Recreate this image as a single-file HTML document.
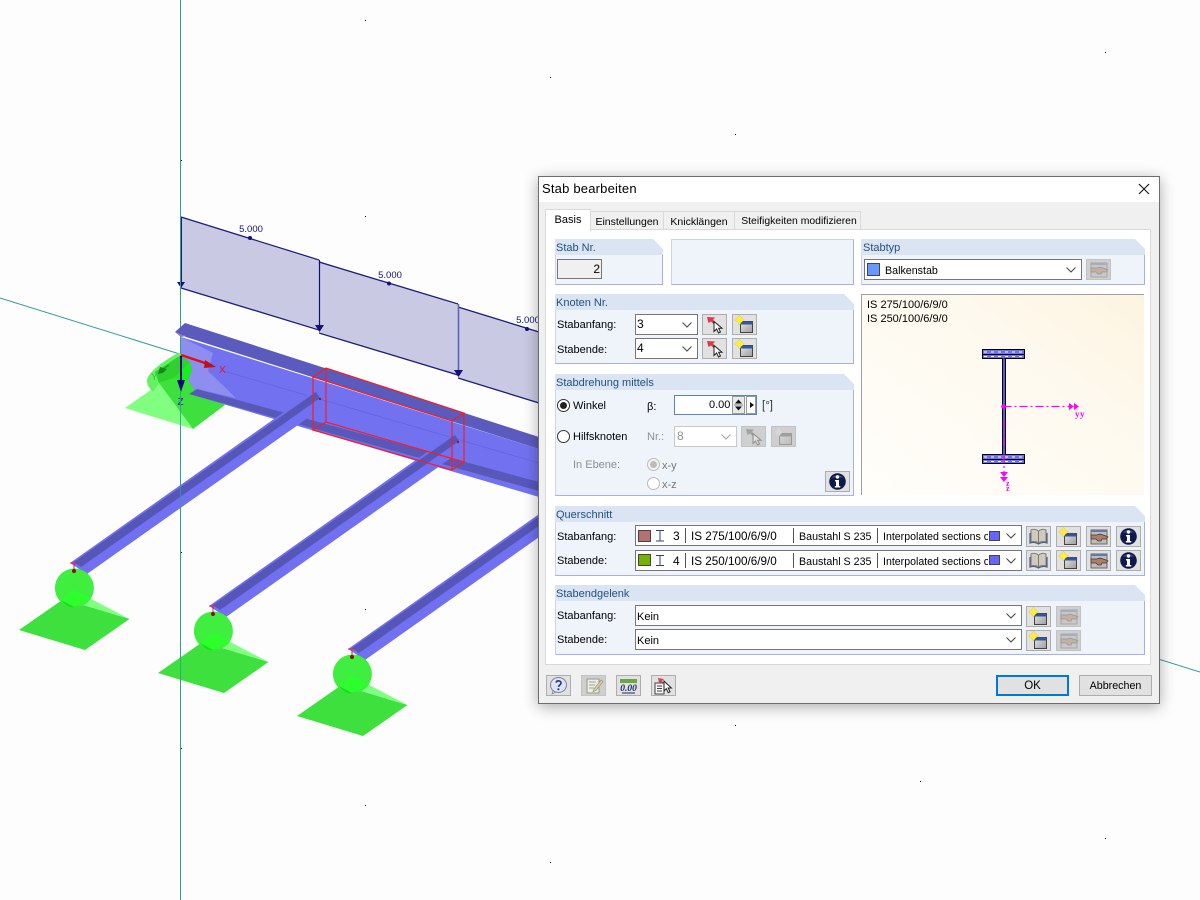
<!DOCTYPE html>
<html lang="de"><head><meta charset="utf-8"><title>Stab bearbeiten</title>
<style>
html,body{margin:0;padding:0;width:1200px;height:900px;overflow:hidden;background:#fdfdfd;font-family:"Liberation Sans",sans-serif;font-size:11px;color:#000}
#cv{position:absolute;left:0;top:0}
#dlg{position:absolute;left:538px;top:176px;width:620px;height:526px;background:#f0f0f0;border:1px solid #6d6d6d;box-shadow:0 3px 14px rgba(0,0,0,.32)}
#lay{position:absolute;left:-539px;top:-177px;width:1200px;height:900px}
.a{position:absolute;box-sizing:border-box}
.t{position:absolute;white-space:nowrap;line-height:14px;height:14px;margin-top:1px}
.g{color:#8f8f8f}
.gh{position:absolute;box-sizing:border-box;background:#dbe4f3;height:16px;clip-path:polygon(0 0,calc(100% - 10px) 0,100% 10px,100% 100%,0 100%);color:#22527f;padding-left:1px;line-height:19px}
.gb{position:absolute;box-sizing:border-box;background:#eff3fa;border-right:1px solid #a9aee6;border-bottom:1px solid #a9aee6;border-left:1px solid #ccd3ee;border-top:1px solid #fff}
.c{position:absolute;box-sizing:border-box;background:#fff;border:1px solid #767676}
.c svg.ch{position:absolute;right:5px;top:50%;margin-top:-3px}
.b{position:absolute;box-sizing:border-box;width:25px;height:21px;background:#e1e1e1;border:1px solid #adadad}
.b svg{position:absolute;left:-1px;top:-1px}
.d{background:#cfcfcf;border-color:#c2c2c2}
.d svg{opacity:.38}
.sep{position:absolute;width:1px;background:#555}
.sw{position:absolute;box-sizing:border-box;border:1px solid #444}
.r{position:absolute;box-sizing:border-box;width:13px;height:13px;border-radius:50%;border:1px solid #333;background:#fff}
.btn{position:absolute;box-sizing:border-box;width:73px;height:21px;background:#e1e1e1;border:1px solid #adadad;text-align:center;line-height:21px;font-size:10.7px}
.tab{position:absolute;box-sizing:border-box;text-align:center;background:#f0f0f0;border:1px solid #d9d9d9;border-bottom:0;line-height:20px;top:211px;height:18px;font-size:10.500px}
.q{font-size:11.700px}
.m{font-size:10.700px}
.i{font-size:10.600px}
</style></head><body>
<svg width="0" height="0" style="position:absolute">
<defs>
<linearGradient id="wg" x1="0" y1="0" x2="1" y2="1"><stop offset="0" stop-color="#e6e6e6"/><stop offset="1" stop-color="#9c9c9c"/></linearGradient>
<symbol id="chev" viewBox="0 0 10 6"><polyline points="0.5,0.5 5,5 9.500,0.5" fill="none" stroke="#444" stroke-width="1"/></symbol>
<symbol id="new" viewBox="0 0 25 21"><rect x="8.500" y="7.500" width="12" height="11" fill="url(#wg)" stroke="#444"/><rect x="8.500" y="7.500" width="12" height="3" fill="#34549c"/><polygon points="12.500,6 9.500,8 7.500,11 5.500,8 2.500,6 5.500,4 7.500,1 9.500,4" fill="#ffef3a" stroke="#d4c42a" stroke-width=".4"/><circle cx="7.500" cy="6" r="2.500" fill="#ffef3a"/></symbol>
<symbol id="pick" viewBox="0 0 25 21"><path d="M5 3l8 .5-2 2.500 3 3-2 1.500-3-3-2.500 1.500z" fill="#dc3a48"/><path d="M12 7.500v10l2.500-2.500 2 4 2-1-2-3.800h3.500z" fill="#fff" stroke="#222" stroke-width="1"/></symbol>
<symbol id="hand" viewBox="0 0 25 21"><rect x="5" y="4" width="16" height="14" fill="#bdbdbd" stroke="#666"/><rect x="5" y="4" width="16" height="2" fill="#6178ac"/><path d="M5 9h6l3-1 6 2 2 1-2 2h-4l-1 2h-3l-2-2H5z" fill="#a98069" stroke="#4d3328" stroke-width=".7"/></symbol>
<symbol id="book" viewBox="0 0 25 21"><path d="M12.500 5C10 3 7 3 5 4v12c3-1 5-1 7.500 1 2.500-2 4.500-2 7.500-1V4c-2-1-5-1-7.500 1z" fill="#cfcabc" stroke="#7a7a7a"/><path d="M4 7v10c3-1 6-.5 8.500 1 2.500-1.500 5.500-2 8.500-1V7" fill="none" stroke="#4c5c88" stroke-width="1.200"/><path d="M12.500 5v12" stroke="#7d7a70"/></symbol>
<symbol id="info" viewBox="0 0 25 21"><circle cx="12.500" cy="10.500" r="8.300" fill="#0f1a4c"/><path d="M7 6.500a7 6 0 0 1 11 0" fill="#5c6ca0" opacity=".7"/><circle cx="12.500" cy="6" r="1.700" fill="#fff"/><path d="M10 9h4v6h1.300v1.500H9.800V15H11v-4.500h-1z" fill="#fff"/></symbol>
<symbol id="help" viewBox="0 0 25 21"><ellipse cx="12.500" cy="10" rx="8" ry="7.500" fill="#dfe4f2" stroke="#7b7f98"/><path d="M7 16l-1 3 4-2z" fill="#dfe4f2" stroke="#7b7f98" stroke-width=".7"/><path d="M10 7.500c1-2.500 5.500-2 5 .8-.3 1.500-2.500 2-2.500 3.700" fill="none" stroke="#2a3f86" stroke-width="1.700"/><circle cx="12.400" cy="14.300" r="1.100" fill="#2a3f86"/></symbol>
<symbol id="edit" viewBox="0 0 25 21"><rect x="6" y="4" width="12" height="14" fill="#f4f4f0" stroke="#8a8a80"/><path d="M8 7h7M8 10h6M8 13h5" stroke="#9a9a90"/><path d="M13 14l7-9 2 1.500-7 9-3 1z" fill="#d8d498" stroke="#86845a" stroke-width=".7"/></symbol>
<symbol id="doc" viewBox="0 0 25 21"><path d="M7 3l6 1-2 2 2 2-2 1-2-2-1 1z" fill="#d8434e"/><rect x="4" y="8" width="9" height="11" fill="#f4f4f4" stroke="#444"/><path d="M6 11h5M6 13.500h5M6 16h5" stroke="#444"/><path d="M13 6v10l2.300-2.300 2 4 1.800-1-2-3.700h3.300z" fill="#fff" stroke="#222"/></symbol>
</defs></svg>

<svg id="cv" width="1200" height="900" viewBox="0 0 1200 900">
<g fill="#111">
<rect x="365" y="20" width="1" height="1"/><rect x="550" y="77" width="1" height="1"/><rect x="735" y="134" width="1" height="1"/><rect x="1105" y="52" width="1" height="1"/><rect x="365" y="216" width="1" height="1"/><rect x="365" y="609" width="1" height="1"/><rect x="365" y="805" width="1" height="1"/><rect x="550" y="862" width="1" height="1"/><rect x="735" y="725" width="1" height="1"/><rect x="920" y="781" width="1" height="1"/><rect x="1105" y="838" width="1" height="1"/><rect x="180" y="160" width="2" height="1"/><rect x="180" y="552" width="2" height="1"/><rect x="180" y="748" width="2" height="1"/><rect x="550" y="273" width="1" height="1"/>
</g>
<!-- load -->
<polygon points="181,217 319,261 319,329 181,288" fill="#c9c9e3"/>
<polygon points="319,261 458,305 458,376 319,332" fill="#c9c9e3"/>
<polygon points="458,307 539,332 539,403 458,378" fill="#c9c9e3"/>
<g fill="none" stroke="#1c1c7e" stroke-width="1.300">
<path d="M181 217L319 260M319 262L458 304M458 307L539 332M181 288L319 330M319 333L458 375M458 378L539 403"/>
</g>
<path d="M181.500 217V284" stroke="#1c1c7e" stroke-width="1"/><path d="M319.500 260V326" stroke="#0f0f70" stroke-width="1.200"/><path d="M458.500 304V372" stroke="#6060b4" stroke-width="1.600"/>
<path d="M177 282h8l-4 6zM315 325h9l-4.500 7zM454 370h9l-4.500 7z" fill="#12127a"/>
<circle cx="250" cy="238" r="2" fill="#12127a"/><circle cx="389" cy="283.500" r="2" fill="#12127a"/><circle cx="527" cy="329" r="2" fill="#12127a"/>
<g font-family="Liberation Sans" font-size="9.500" fill="#12127a" text-anchor="middle"><text x="251" y="232">5.000</text><text x="390" y="278">5.000</text><text x="528" y="323">5.000</text></g>
<!-- axes lines -->
<path d="M180.500 0V900" stroke="#2f9f94" stroke-width="1"/>
<path d="M0 298L1200 672" stroke="#2f9f94" stroke-width="1"/>
<!-- origin support -->
<polygon points="125,408 152,389 159,383 193,429" fill="#80ff80"/>
<polygon points="159,383 176,377 188,380 225,405 193,429" fill="#3ee03e"/>
<path d="M147 380C148 372 165 360 178 353C186 355 192 362 192 372L188 380L176 377L159 383L153 392C149 388 147 385 147 380Z" fill="#66f066"/>
<path d="M159 383L176 377L188 380L192 370C192 362 186 356 181 355L155 372Z" fill="#30d030"/>
<path d="M159 383L175 377L190 362L192 372L188 381L176 378Z" fill="#18f018"/>
<!-- main beam -->
<polygon points="181,337 539,449 539,486 197,389 195,390 188,380 192,370 190,362 181,356" fill="#7272f0"/>
<polygon points="181,337 213,353 208,371 236,398 197,389 195,390 188,380 192,370 190,362 181,356" fill="#8e8ef0"/>
<path d="M220 370L539 463" stroke="#5f5fdc" stroke-width=".6"/>
<polygon points="175,332 185,323 539,437 539,449 186,337" fill="#5b5bbd"/>
<polygon points="175,332 186,336 181,337" fill="#8a78c8"/>
<polygon points="189,394 539,490 539,497" fill="#7272f0"/>
<polygon points="197,389 539,482 539,491 189,394" fill="#5858b8"/>
<!-- secondary beams -->
<g id="sb">
<polygon points="70,563 315,390 322,408 87,574" fill="#7070f0"/>
<polygon points="74,562 81,567 320,398 316,392" fill="#5656b8"/>
</g>
<g transform="translate(139,43)"><polygon points="70,563 315,390 322,408 87,574" fill="#7070f0"/><polygon points="74,562 81,567 320,398 316,392" fill="#5656b8"/></g>
<g transform="translate(278,86)"><polygon points="70,563 315,390 322,408 87,574" fill="#7070f0"/><polygon points="74,562 81,567 320,398 316,392" fill="#5656b8"/></g>
<!-- red box -->
<g fill="none" stroke="#f81c22" stroke-width="1.200">
<path d="M313 377L326 368L464 413L452 421ZM313 430L326 422L464 462L452 470ZM313 377V430M326 368V422M464 413V462M452 421V470"/>
</g>
<circle cx="320" cy="399" r="1.200" fill="#a01030"/><circle cx="458" cy="442" r="1.200" fill="#a01030"/>
<!-- axes -->
<path d="M181 355L208 364" stroke="#e01010" stroke-width="2.500"/><path d="M205 360L216 367L204 368Z" fill="#c01010"/>
<path d="M181 356V383" stroke="#0a0a90" stroke-width="2"/><path d="M177 380h8l-4 12Z" fill="#0a0a80"/>
<path d="M169 365L160 371" stroke="#0a9a10" stroke-width="1"/><path d="M160 367l7 2-4 4-5 1z" fill="#128a18"/>
<g font-family="Liberation Sans" font-size="10"><text x="219" y="373" fill="#f01010">X</text><text x="177.500" y="405" fill="#1010f0">Z</text><text x="151" y="380" fill="#33cc33">Y</text></g>
<!-- supports -->
<g id="s1">
<polygon points="19,630 63.500,599 129.500,619 85,650" fill="#3ee03e"/>
<polygon points="74,590 63.500,599 129.500,619" fill="#80ff80"/>
<circle cx="74.400" cy="588" r="19.500" fill="#3fee3f"/>
<polygon points="61,600 74,590 91,598 74,607" fill="#2dff2d"/>
<path d="M61 600L74 607L80 606C72 609 66 607 61 600Z" fill="#16e016"/>
<path d="M74 564V571M70 563H78" stroke="#e02040" stroke-width="1"/><circle cx="74" cy="571" r="2" fill="#8a1010"/>
</g>
<g transform="translate(139,43)">
<polygon points="19,630 63.500,599 129.500,619 85,650" fill="#3ee03e"/>
<polygon points="74,590 63.500,599 129.500,619" fill="#80ff80"/>
<circle cx="74.400" cy="588" r="19.500" fill="#3fee3f"/>
<polygon points="61,600 74,590 91,598 74,607" fill="#2dff2d"/>
<path d="M61 600L74 607L80 606C72 609 66 607 61 600Z" fill="#16e016"/>
<path d="M74 564V571M70 563H78" stroke="#e02040" stroke-width="1"/><circle cx="74" cy="571" r="2" fill="#8a1010"/>
</g>
<g transform="translate(278,86)">
<polygon points="19,630 63.500,599 129.500,619 85,650" fill="#3ee03e"/>
<polygon points="74,590 63.500,599 129.500,619" fill="#80ff80"/>
<circle cx="74.400" cy="588" r="19.500" fill="#3fee3f"/>
<polygon points="61,600 74,590 91,598 74,607" fill="#2dff2d"/>
<path d="M61 600L74 607L80 606C72 609 66 607 61 600Z" fill="#16e016"/>
<path d="M74 564V571M70 563H78" stroke="#e02040" stroke-width="1"/><circle cx="74" cy="571" r="2" fill="#8a1010"/>
</g>
<path d="M180.500 392V900" stroke="#2f9f94" stroke-width="1" opacity=".85"/>
</svg>

<div id="dlg"><div id="lay">
<!-- title -->
<div class="a" style="left:539px;top:177px;width:620px;height:25px;background:#fff"></div>
<div class="t" style="left:542px;top:181px;font-size:13px;letter-spacing:.2px">Stab bearbeiten</div>
<svg class="a" style="left:1138px;top:183px" width="12" height="12"><path d="M1 1L11 11M11 1L1 11" stroke="#111" stroke-width="1.100"/></svg>
<!-- panel -->
<div class="a" style="left:545px;top:229px;width:606px;height:436px;background:#fff;border:1px solid #d9d9d9"></div>
<!-- tabs -->
<div class="tab" style="left:590px;width:74px;padding-left:0">Einstellungen</div>
<div class="tab" style="left:663px;width:72px;padding-left:0">Knicklängen</div>
<div class="tab" style="left:734px;width:127px;padding-left:3px;font-size:10.400px">Steifigkeiten modifizieren</div>
<div class="a" style="left:545px;top:209px;width:46px;height:22px;background:#fff;border:1px solid #d9d9d9;border-bottom:0;text-align:center;line-height:21px">Basis</div>

<!-- Stab Nr -->
<div class="gb" style="left:555px;top:254px;width:108px;height:31px"></div><div class="gh" style="left:555px;top:239px;width:108px">Stab Nr.</div>
<div class="c" style="left:557px;top:259px;width:45px;height:20px;background:#f0f0f0;text-align:right;padding-right:1px;line-height:18px;font-size:12px">2</div>
<!-- empty -->
<div class="a" style="left:671px;top:239px;width:183px;height:46px;background:#eff3fa;border:1px solid #ccd3ee;border-right-color:#a9aee6;border-bottom-color:#a9aee6"></div>
<!-- Stabtyp -->
<div class="gb" style="left:861px;top:254px;width:284px;height:31px"></div><div class="gh" style="left:861px;top:239px;width:284px;padding-left:2px">Stabtyp</div>
<div class="c" style="left:864px;top:259px;width:218px;height:21px"><svg class="ch" width="10" height="6"><use href="#chev"/></svg></div>
<div class="sw" style="left:867px;top:263px;width:13px;height:13px;background:#6699ff"></div>
<div class="t m" style="left:885px;top:263px">Balkenstab</div>
<div class="b d" style="left:1086px;top:259px"><svg width="25" height="21"><use href="#hand"/></svg></div>
<!-- Knoten -->
<div class="gb" style="left:555px;top:309px;width:299px;height:55px"></div><div class="gh" style="left:555px;top:294px;width:299px">Knoten Nr.</div>
<div class="t" style="left:557px;top:317px">Stabanfang:</div><div class="t" style="left:557px;top:342px">Stabende:</div>
<div class="c" style="left:635px;top:314px;width:63px;height:21px;padding-left:1px;line-height:18px;font-size:12px">3<svg class="ch" width="10" height="6"><use href="#chev"/></svg></div>
<div class="c" style="left:635px;top:338px;width:63px;height:21px;padding-left:1px;line-height:18px;font-size:12px">4<svg class="ch" width="10" height="6"><use href="#chev"/></svg></div>
<div class="b" style="left:702px;top:314px"><svg width="25" height="21"><use href="#pick"/></svg></div>
<div class="b" style="left:732px;top:314px"><svg width="25" height="21"><use href="#new"/></svg></div>
<div class="b" style="left:702px;top:338px"><svg width="25" height="21"><use href="#pick"/></svg></div>
<div class="b" style="left:732px;top:338px"><svg width="25" height="21"><use href="#new"/></svg></div>
<!-- Stabdrehung -->
<div class="gb" style="left:555px;top:389px;width:299px;height:107px"></div><div class="gh" style="left:555px;top:374px;width:299px">Stabdrehung mittels</div>
<div class="r" style="left:557px;top:399px"></div><div class="a" style="left:560px;top:402px;width:7px;height:7px;border-radius:50%;background:#222"></div>
<div class="t" style="left:573px;top:398px">Winkel</div>
<div class="t" style="left:647px;top:399px">β:</div>
<div class="a" style="left:674px;top:395px;width:83px;height:20px;background:#fff;border:1px solid #5a86b0"></div>
<div class="t" style="left:709px;top:397px">0.00</div>
<div class="a" style="left:732px;top:396px;width:13px;height:18px;background:#eaeaea;border:1px solid #999"></div>
<svg class="a" style="left:732px;top:396px" width="24" height="18"><path d="M3 7.500h7L6.500 3.500zM3 10.500h7L6.500 14.500z" fill="#111"/><path d="M2 9h9" stroke="#888"/><path d="M18 6v6l4-3z" fill="#111"/></svg>
<div class="a" style="left:746px;top:396px;width:10px;height:18px;border:1px solid #999"></div>
<div class="t" style="left:762px;top:398px;color:#333;font-size:11.500px">[°]</div>
<div class="r" style="left:557px;top:430px"></div>
<div class="t" style="left:573px;top:429px">Hilfsknoten</div>
<div class="t g" style="left:647px;top:429px">Nr.:</div>
<div class="c" style="left:674px;top:426px;width:63px;height:21px;border-color:#c8c8c8;padding-left:2px;line-height:18px;color:#8f8f8f;font-size:12px">8<svg class="ch" width="10" height="6" style="opacity:.5"><use href="#chev"/></svg></div>
<div class="b d" style="left:741px;top:426px"><svg width="25" height="21" style="filter:grayscale(1)"><use href="#pick"/></svg></div>
<div class="b d" style="left:771px;top:426px"><svg width="25" height="21" style="filter:grayscale(1)"><use href="#new"/></svg></div>
<div class="t g" style="left:573px;top:457px">In Ebene:</div>
<div class="r" style="left:647px;top:458px;border-color:#bbb;background:#f4f4f4"></div><div class="a" style="left:650px;top:461px;width:7px;height:7px;border-radius:50%;background:#bbb"></div>
<div class="r" style="left:647px;top:477px;border-color:#bbb;background:#fff"></div>
<div class="t g" style="left:662px;top:458px;color:#777">x-y</div><div class="t g" style="left:662px;top:477px;color:#777">x-z</div>
<div class="b" style="left:825px;top:471px"><svg width="25" height="21"><use href="#info"/></svg></div>
<!-- preview -->
<div class="a" style="left:861px;top:294px;width:283px;height:201px;background:linear-gradient(215deg,#fdf4e0 0%,#fef9ee 35%,#fffefa 100%);border-left:1px solid #a0a0a0;border-top:1px solid #a0a0a0"></div>
<div class="t" style="left:867px;top:297px">IS 275/100/6/9/0</div><div class="t" style="left:867px;top:311px">IS 250/100/6/9/0</div>
<svg class="a" style="left:975px;top:345px" width="115" height="150" viewBox="0 0 115 150">
<g stroke="#000" stroke-width="1"><rect x="7.500" y="4.500" width="42" height="9" fill="#7070f0"/><rect x="7.500" y="109.500" width="42" height="9" fill="#7070f0"/></g>
<path d="M7 9.500h43M7 114.500h43" stroke="#000" stroke-width="1"/>
<path d="M9 7h39M9 11.500h39M9 112h39M9 116.500h39" stroke="#fff" stroke-width="1" stroke-dasharray="3 4"/>
<path d="M27.500 13.500V109M30.500 13.500V109" stroke="#000" stroke-width="1"/><path d="M29 13.500V109" stroke="#5a5ae0" stroke-width="2"/>
<path d="M28.500 61.500H96" stroke="#ff00ff" stroke-width="1.300" stroke-dasharray="8 3 2 3"/>
<path d="M29 75V130" stroke="#ff00ff" stroke-width="1.200" stroke-dasharray="9 3 2 3"/>
<circle cx="28.500" cy="61.500" r="2.300" fill="#ff00ff"/>
<path d="M94 58v7l5-3.500zM99 58v7l5-3.500z" fill="#ff00ff"/><path d="M25 127h8l-4 5zM25 132h8l-4 5z" fill="#ff00ff"/>
<text x="100" y="72" font-family="Liberation Serif" font-size="9" font-weight="bold" letter-spacing=".5" fill="#ff00ff">yy</text>
<text x="31" y="141" font-family="Liberation Serif" font-size="8" font-weight="bold" fill="#ff00ff">z</text><text x="31" y="146" font-family="Liberation Serif" font-size="8" font-weight="bold" fill="#ff00ff">z</text>
</svg>
<!-- Querschnitt -->
<div class="gb" style="left:555px;top:521px;width:590px;height:55px"></div><div class="gh" style="left:555px;top:506px;width:590px">Querschnitt</div>
<div class="t" style="left:557px;top:529px">Stabanfang:</div><div class="t" style="left:557px;top:553px">Stabende:</div>
<div class="c" style="left:635px;top:525px;width:387px;height:21px"><svg class="ch" width="10" height="6"><use href="#chev"/></svg></div>
<div class="c" style="left:635px;top:550px;width:387px;height:21px"><svg class="ch" width="10" height="6"><use href="#chev"/></svg></div>
<div class="sw" style="left:638px;top:530px;width:13px;height:12px;background:#b86f72"></div>
<div class="sw" style="left:638px;top:554px;width:13px;height:12px;background:#74b300"></div>
<svg class="a" style="left:655px;top:530px" width="10" height="37"><path d="M1 .500h8M5 .500V11M1 11h8M1 25.500h8M5 25.500V36M1 35.500h8" stroke="#30407a" stroke-width="1" fill="none"/></svg>
<div class="t" style="left:673px;top:528px;font-size:12px">3</div><div class="t" style="left:673px;top:553px;font-size:12px">4</div>
<div class="sep" style="left:685px;top:528px;height:15px"></div><div class="sep" style="left:685px;top:553px;height:15px"></div>
<div class="t q" style="left:691px;top:529px">IS 275/100/6/9/0</div><div class="t q" style="left:691px;top:554px">IS 250/100/6/9/0</div>
<div class="sep" style="left:793px;top:528px;height:15px"></div><div class="sep" style="left:793px;top:553px;height:15px"></div>
<div class="t m" style="left:799px;top:529px">Baustahl S 235</div><div class="t m" style="left:799px;top:554px">Baustahl S 235</div>
<div class="sep" style="left:877px;top:528px;height:15px"></div><div class="sep" style="left:877px;top:553px;height:15px"></div>
<div class="t i" style="left:883px;top:529px;width:105px;overflow:hidden">Interpolated sections of</div><div class="t i" style="left:883px;top:554px;width:105px;overflow:hidden">Interpolated sections of</div>
<div class="sw" style="left:989px;top:531px;width:11px;height:10px;background:#6666ff"></div><div class="sw" style="left:989px;top:555px;width:11px;height:10px;background:#6666ff"></div>
<div class="b" style="left:1026px;top:526px"><svg width="25" height="21"><use href="#book"/></svg></div>
<div class="b" style="left:1056px;top:526px"><svg width="25" height="21"><use href="#new"/></svg></div>
<div class="b" style="left:1086px;top:526px"><svg width="25" height="21"><use href="#hand"/></svg></div>
<div class="b" style="left:1116px;top:526px"><svg width="25" height="21"><use href="#info"/></svg></div>
<div class="b" style="left:1026px;top:550px"><svg width="25" height="21"><use href="#book"/></svg></div>
<div class="b" style="left:1056px;top:550px"><svg width="25" height="21"><use href="#new"/></svg></div>
<div class="b" style="left:1086px;top:550px"><svg width="25" height="21"><use href="#hand"/></svg></div>
<div class="b" style="left:1116px;top:550px"><svg width="25" height="21"><use href="#info"/></svg></div>
<!-- Stabendgelenk -->
<div class="gb" style="left:555px;top:600px;width:590px;height:55px"></div><div class="gh" style="left:555px;top:585px;width:590px">Stabendgelenk</div>
<div class="t" style="left:557px;top:608px">Stabanfang:</div><div class="t" style="left:557px;top:632px">Stabende:</div>
<div class="c" style="left:635px;top:605px;width:387px;height:21px;padding-left:1px;line-height:22px">Kein<svg class="ch" width="10" height="6"><use href="#chev"/></svg></div>
<div class="c" style="left:635px;top:629px;width:387px;height:21px;padding-left:1px;line-height:22px">Kein<svg class="ch" width="10" height="6"><use href="#chev"/></svg></div>
<div class="b" style="left:1026px;top:606px"><svg width="25" height="21"><use href="#new"/></svg></div>
<div class="b d" style="left:1056px;top:606px"><svg width="25" height="21"><use href="#hand"/></svg></div>
<div class="b" style="left:1026px;top:630px"><svg width="25" height="21"><use href="#new"/></svg></div>
<div class="b d" style="left:1056px;top:630px"><svg width="25" height="21"><use href="#hand"/></svg></div>
<!-- footer -->
<div class="b" style="left:546px;top:675px"><svg width="25" height="21"><use href="#help"/></svg></div>
<div class="b d" style="left:581px;top:675px"><svg width="25" height="21" style="opacity:.8"><use href="#edit"/></svg></div>
<div class="b" style="left:616px;top:675px"><svg width="25" height="21"><rect x="4" y="4" width="17" height="4" fill="#6da544"/><text x="12.500" y="16" font-family="Liberation Serif" font-size="9.500" font-weight="bold" font-style="italic" text-anchor="middle" fill="#1c2c6c">0.00</text><path d="M6 18h13" stroke="#1c2c6c"/></svg></div>
<div class="b" style="left:651px;top:675px"><svg width="25" height="21"><use href="#doc"/></svg></div>
<div class="btn" style="left:996px;top:675px;border:2px solid #0078d7;line-height:19px;font-size:11.500px">OK</div>
<div class="btn" style="left:1079px;top:675px">Abbrechen</div>
</div></div>
</body></html>
